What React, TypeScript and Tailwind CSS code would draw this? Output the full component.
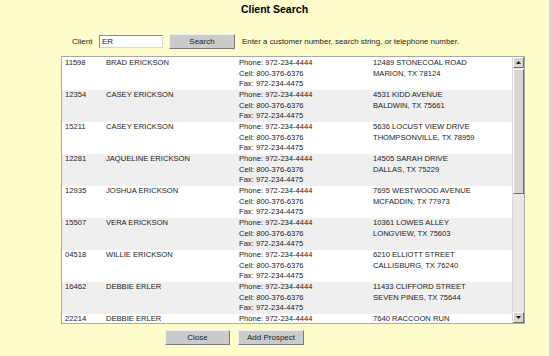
import React from 'react';

type Client = {
  id: string;
  name: string;
  street: string;
  city?: string;
};

const clients: Client[] = [
  { id: '11598', name: 'BRAD ERICKSON', street: '12489 STONECOAL ROAD', city: 'MARION, TX 78124' },
  { id: '12354', name: 'CASEY ERICKSON', street: '4531 KIDD AVENUE', city: 'BALDWIN, TX 75661' },
  { id: '15211', name: 'CASEY ERICKSON', street: '5636 LOCUST VIEW DRIVE', city: 'THOMPSONVILLE, TX 78959' },
  { id: '12281', name: 'JAQUELINE ERICKSON', street: '14505 SARAH DRIVE', city: 'DALLAS, TX 75229' },
  { id: '12935', name: 'JOSHUA ERICKSON', street: '7695 WESTWOOD AVENUE', city: 'MCFADDIN, TX 77973' },
  { id: '15507', name: 'VERA ERICKSON', street: '10361 LOWES ALLEY', city: 'LONGVIEW, TX 75603' },
  { id: '04518', name: 'WILLIE ERICKSON', street: '6210 ELLIOTT STREET', city: 'CALLISBURG, TX 76240' },
  { id: '16462', name: 'DEBBIE ERLER', street: '11433 CLIFFORD STREET', city: 'SEVEN PINES, TX 75644' },
  { id: '22214', name: 'DEBBIE ERLER', street: '7640 RACCOON RUN' },
];

function OldButton({ children, className }: { children: React.ReactNode; className?: string }) {
  return (
    <button
      className={
        'h-[15px] px-0 bg-[#cbcbcb] border border-t-[#f0f0f0] border-l-[#f0f0f0] border-r-[#7a7a7a] border-b-[#7a7a7a] text-[8px] text-[#222] leading-[10px] whitespace-nowrap flex items-center justify-center ' +
        (className || '')
      }
    >
      {children}
    </button>
  );
}

export default function App() {
  return (
    <div className="w-[552px] h-[356px] bg-[#fffdcc] border-r-[3px] border-[#d6d6d6] overflow-hidden font-['Liberation_Sans',sans-serif] text-[#222]">
      <h1 className="pt-[3px] h-[16px] text-center font-bold text-[10.5px] leading-[12px] text-black">
        Client Search
      </h1>

      {/* search bar */}
      <div className="mt-[18px] flex items-center pl-[72px] h-[15px]">
        <span className="text-[8px] w-[27px]">Client</span>
        <div className="w-[64px] h-[13px] bg-white border border-t-[#8a8a8a] border-l-[#8a8a8a] border-r-[#d8d8d8] border-b-[#d8d8d8] text-[8px] leading-[11px] pl-[2px]">
          ER
        </div>
        <OldButton className="ml-[6px] w-[66px]">Search</OldButton>
        <span className="ml-[7px] text-[7.9px]">
          Enter a customer number, search string, or telephone number.
        </span>
      </div>

      {/* results list */}
      <div className="ml-[61px] mt-[7px] w-[464px] h-[268px] bg-white border border-[#a9a9a9] flex">
        <div className="flex-1 overflow-hidden pt-[1px]">
          {clients.map((c, i) => (
            <div
              key={c.id + i}
              className={
                'h-[32px] flex text-[7.6px] leading-[10.67px] ' + (i % 2 === 1 ? 'bg-[#efefef]' : 'bg-white')
              }
            >
              <div className="w-[44px] pl-[3px]">{c.id}</div>
              <div className="w-[133px]">{c.name}</div>
              <div className="w-[134px]">
                <div>Phone: 972-234-4444</div>
                <div>Cell: 800-376-6376</div>
                <div>Fax: 972-234-4475</div>
              </div>
              <div>
                <div>{c.street}</div>
                {c.city && <div>{c.city}</div>}
              </div>
            </div>
          ))}
        </div>

        {/* scrollbar */}
        <div className="w-[12px] bg-[#e9e8e4] flex flex-col border-l border-[#d8d8d8]">
          <div className="h-[11px] bg-[#d8d6d0] border border-t-white border-l-white border-r-[#6e6e6e] border-b-[#6e6e6e] flex items-center justify-center">
            <svg width="5" height="3" viewBox="0 0 5 3">
              <path d="M2.5 0 L5 3 L0 3 Z" fill="#111" />
            </svg>
          </div>
          <div className="h-[125px] mt-[1px] bg-[#d8d6d0] border border-t-white border-l-white border-r-[#6e6e6e] border-b-[#6e6e6e]" />
          <div className="flex-1" />
          <div className="h-[11px] bg-[#d8d6d0] border border-t-white border-l-white border-r-[#6e6e6e] border-b-[#6e6e6e] flex items-center justify-center">
            <svg width="5" height="3" viewBox="0 0 5 3">
              <path d="M0 0 L5 0 L2.5 3 Z" fill="#111" />
            </svg>
          </div>
        </div>
      </div>

      {/* actions */}
      <div className="mt-[6px] flex pl-[165px] gap-[8px]">
        <OldButton className="w-[65px]">Close</OldButton>
        <OldButton className="w-[66px]">Add Prospect</OldButton>
      </div>
    </div>
  );
}
